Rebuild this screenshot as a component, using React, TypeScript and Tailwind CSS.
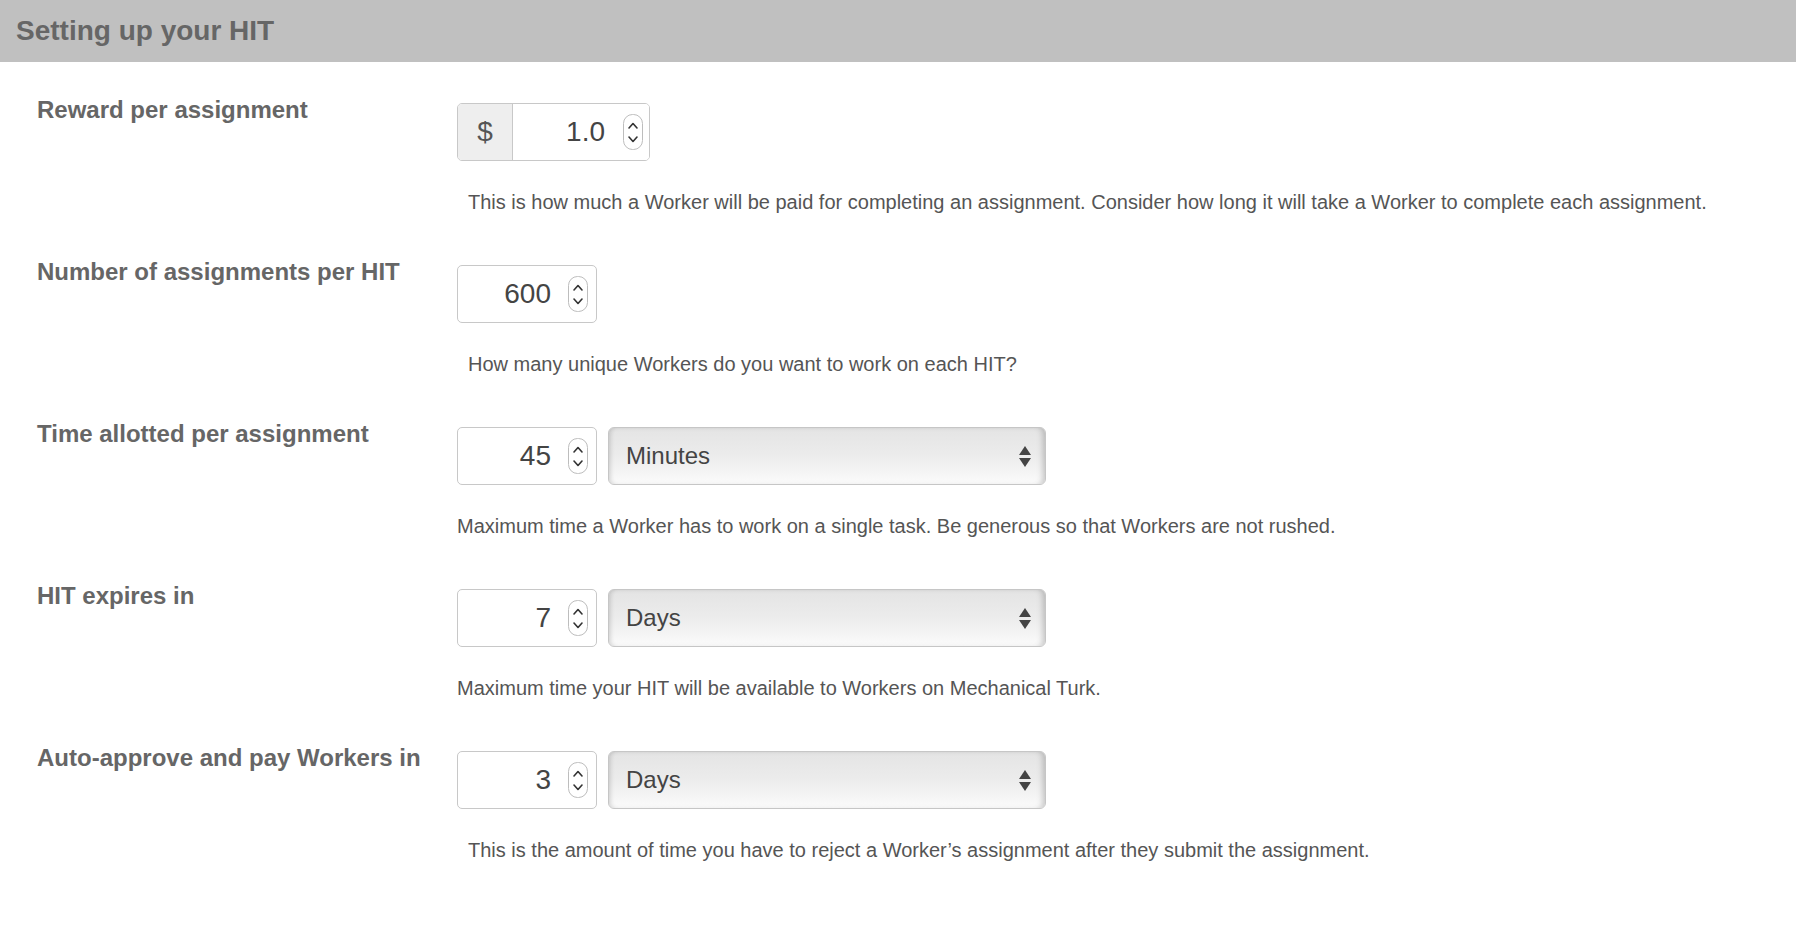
const fields = [
  {
    label: "Reward per assignment",
    kind: "money",
    value: "1.0",
    help: "This is how much a Worker will be paid for completing an assignment. Consider how long it will take a Worker to complete each assignment.",
    indent: true,
  },
  {
    label: "Number of assignments per HIT",
    kind: "number",
    value: "600",
    help: "How many unique Workers do you want to work on each HIT?",
    indent: true,
  },
  {
    label: "Time allotted per assignment",
    kind: "unit",
    value: "45",
    unit: "Minutes",
    help: "Maximum time a Worker has to work on a single task. Be generous so that Workers are not rushed.",
    indent: false,
  },
  {
    label: "HIT expires in",
    kind: "unit",
    value: "7",
    unit: "Days",
    help: "Maximum time your HIT will be available to Workers on Mechanical Turk.",
    indent: false,
  },
  {
    label: "Auto-approve and pay Workers in",
    kind: "unit",
    value: "3",
    unit: "Days",
    help: "This is the amount of time you have to reject a Worker\u2019s assignment after they submit the assignment.",
    indent: true,
  },
];

const Spinner = () => (
  <svg width="20" height="36" viewBox="0 0 20 36" className="shrink-0">
    <rect x="0.5" y="0.5" width="19" height="35" rx="9" fill="#fff" stroke="#bdbdbd" />
    <path d="M6 14 L10 9.5 L14 14" fill="none" stroke="#333" strokeWidth="1.6" strokeLinecap="round" strokeLinejoin="round" />
    <path d="M6 23 L10 27.5 L14 23" fill="none" stroke="#333" strokeWidth="1.6" strokeLinecap="round" strokeLinejoin="round" />
  </svg>
);

// bordered numeric box, 58px tall overall
const NumberBox = ({ value }: { value: string }) => (
  <div className="h-[58px] w-[140px] flex items-center justify-end pr-[8px] bg-white border border-[#c8c8c8] rounded-[5px]">
    <span className="text-[28px] leading-none text-[#444]">{value}</span>
    <span className="ml-[17px]">
      <Spinner />
    </span>
  </div>
);

const UnitSelect = ({ unit }: { unit: string }) => (
  <div className="h-[58px] w-[438px] flex items-center justify-between pl-[17px] pr-[14px] border border-[#c6c6c6] rounded-[6px] bg-gradient-to-b from-[#e4e4e4] via-[#ececec] to-[#fbfbfb] shadow-[inset_4px_0_5px_-3px_rgba(0,0,0,0.18),inset_-5px_0_6px_-3px_rgba(0,0,0,0.22),inset_0_-2px_2px_-1px_rgba(255,255,255,0.9)]">
    <span className="text-[24px] text-[#444]">{unit}</span>
    <svg width="12" height="21" viewBox="0 0 12 21">
      <path d="M6 0 L12 9 L0 9 Z" fill="#444" />
      <path d="M0 12 L12 12 L6 21 Z" fill="#444" />
    </svg>
  </div>
);

export default function App() {
  return (
    <div className="min-h-screen bg-white font-['Liberation_Sans',Arial,sans-serif]">
      <div className="h-[62px] bg-[#c0c0c0] flex items-center pl-4">
        <h1 className="text-[28px] font-bold text-[#666]">Setting up your HIT</h1>
      </div>

      <div className="pl-[37px] pt-[34px] flex flex-col gap-[44px]">
        {fields.map((f) => (
          <div key={f.label} className="flex items-start">
            <div className="w-[420px] shrink-0 text-[24px] leading-[28px] font-bold text-[#666]">
              {f.label}
            </div>
            <div className="mt-[7px] flex flex-col">
              {f.kind === "money" && (
                <div className="h-[58px] w-[193px] flex border border-[#c8c8c8] rounded-[5px] overflow-hidden">
                  <div className="w-[55px] shrink-0 flex items-center justify-center bg-[#eeeeee] border-r border-[#c8c8c8] text-[28px] text-[#555]">
                    $
                  </div>
                  <div className="flex-1 flex items-center justify-end pr-[6px] bg-white">
                    <span className="text-[28px] leading-none text-[#444]">{f.value}</span>
                    <span className="ml-[18px]">
                      <Spinner />
                    </span>
                  </div>
                </div>
              )}
              {f.kind === "number" && <NumberBox value={f.value} />}
              {f.kind === "unit" && (
                <div className="flex items-center gap-[11px]">
                  <NumberBox value={f.value} />
                  <UnitSelect unit={f.unit ?? ""} />
                </div>
              )}
              <p
                className={`mt-[29px] text-[20px] leading-[24px] text-[#555] ${f.indent ? "ml-[11px]" : ""}`}
              >
                {f.help}
              </p>
            </div>
          </div>
        ))}
      </div>
    </div>
  );
}
